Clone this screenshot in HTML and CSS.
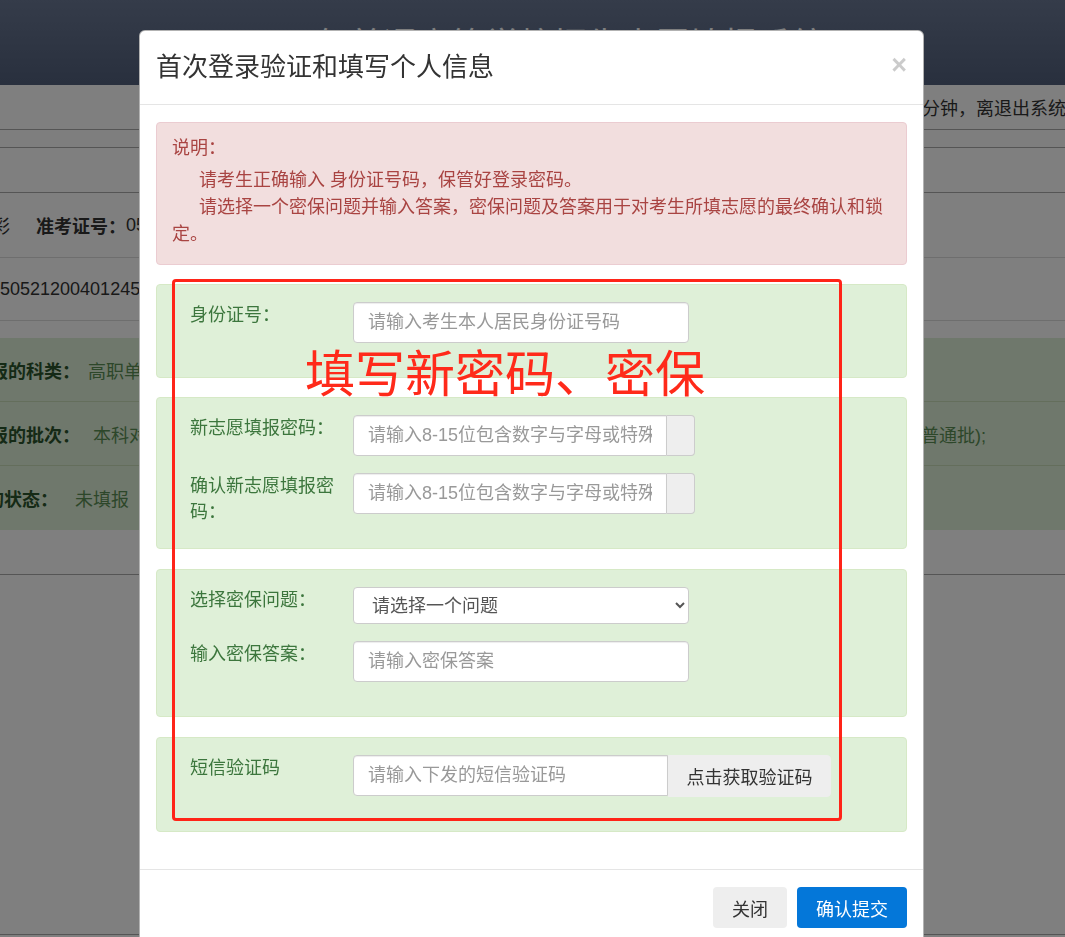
FILE: index.html
```html
<!DOCTYPE html>
<html lang="zh-CN">
<head>
    <meta charset="UTF-8">
    <meta name="viewport" content="width=device-width, initial-scale=1.0">
    <title>志愿填报系统</title>
    <link rel="stylesheet" href="styles.css">
</head>
<body>
    <div class="page">
        <div class="top-header">
            <h1>2022年普通高等学校招生志愿填报系统</h1>
        </div>
        <div class="row row-tip"><span class="login-tip">已登录12分钟，离退出系统还有8分钟</span></div>
        <div class="row row-thin"></div>
        <div class="row row-blank"></div>
        <div class="row row-info">
            <span class="cell-name">姓名：李彩</span>
            <b>准考证号：</b><span>0521050512345</span>
        </div>
        <div class="row row-id"><span class="cell-id">450521200401245612</span></div>
        <div class="gap"></div>
        <div class="score-block">
            <div class="score-row">
                <b class="lbl-a">填报的科类：</b><span class="val">高职单招类</span>
            </div>
            <div class="score-row">
                <b class="lbl-a">填报的批次：</b><span class="val val-wide">本科对口批、高职单招批、本科提前批、本科第一批、本科第二批、高职高专提前批、专科层次高职高专普通批);</span>
            </div>
            <div class="score-row last">
                <b class="lbl-b">志愿的状态：</b><span class="val val-state">未填报</span>
            </div>
        </div>
        <div class="row row-blank"></div>
        <div class="row row-rest"></div>
    </div>

    <div class="backdrop"></div>

    <div class="modal">
        <div class="modal-header">
            <h4 class="modal-title">首次登录验证和填写个人信息</h4>
            <button class="close" type="button">&times;</button>
        </div>
        <div class="modal-body">
            <div class="alert-danger">
                <div>说明：</div>
                <p>请考生正确输入 身份证号码，保管好登录密码。</p>
                <p>请选择一个密保问题并输入答案，密保问题及答案用于对考生所填志愿的最终确认和锁定。</p>
            </div>

            <div class="panel-ok first">
                <div class="form-row">
                    <label class="form-label">身份证号：</label>
                    <input class="form-input" type="text" placeholder="请输入考生本人居民身份证号码">
                </div>
            </div>

            <div class="panel-ok">
                <div class="form-row">
                    <label class="form-label">新志愿填报密码：</label>
                    <div class="input-group">
                        <input class="form-input" type="password" placeholder="请输入8-15位包含数字与字母或特殊字符的密码">
                        <span class="addon"></span>
                    </div>
                </div>
                <div class="form-row">
                    <label class="form-label">确认新志愿填报密码：</label>
                    <div class="input-group">
                        <input class="form-input" type="password" placeholder="请输入8-15位包含数字与字母或特殊字符的密码">
                        <span class="addon"></span>
                    </div>
                </div>
            </div>

            <div class="panel-ok">
                <div class="form-row">
                    <label class="form-label">选择密保问题：</label>
                    <select class="form-select">
                        <option>请选择一个问题</option>
                        <option>您母亲的姓名是？</option>
                        <option>您就读的初中是？</option>
                    </select>
                </div>
                <div class="form-row">
                    <label class="form-label">输入密保答案：</label>
                    <input class="form-input" type="text" placeholder="请输入密保答案">
                </div>
            </div>

            <div class="panel-ok">
                <div class="form-row">
                    <label class="form-label">短信验证码</label>
                    <div class="sms-group">
                        <input class="form-input" type="text" placeholder="请输入下发的短信验证码">
                        <button class="btn-code" type="button">点击获取验证码</button>
                    </div>
                </div>
            </div>
        </div>
        <div class="modal-footer">
            <button class="btn btn-default" type="button">关闭</button>
            <button class="btn btn-primary" type="button">确认提交</button>
        </div>
    </div>

    <div class="mark-box"></div>
    <div class="mark-text">填写新密码、密保</div>
</body>
</html>
```

FILE: styles.css
```css
html, body {
    margin: 0;
    height: 100%;
    overflow: hidden;
}

body {
    font-family: "Liberation Sans", "Noto Sans CJK SC", sans-serif;
    font-size: 18px;
    color: #333;
    background-color: #fff;
}

/* page behind the dialog */
.top-header {
    height: 85px;
    background: linear-gradient(#6a7894, #52607c);
    display: flex;
    justify-content: center;
    align-items: center;
}

.top-header h1 {
    margin: 0;
    font-size: 34px;
    font-weight: normal;
    color: #fff;
}

.row {
    display: flex;
    align-items: center;
    white-space: nowrap;
    border-bottom: 1px solid #aaa;
    overflow: hidden;
}

.row-tip {
    height: 44px;
}

.login-tip {
    margin-left: 848px;
}

.row-thin {
    height: 17px;
    background-color: #fcfcfc;
}

.row-blank {
    height: 44px;
}

.row-info {
    height: 64px;
    border-color: #ddd;
}

.cell-name {
    margin-left: -80px;
    margin-right: 26px;
}

.row-id {
    height: 62px;
    border-color: #ddd;
}

.cell-id {
    margin-left: -10px;
}

.gap {
    height: 17px;
}

.score-block {
    background-color: #dff0d8;
}

.score-row {
    height: 63px;
    display: flex;
    align-items: center;
    white-space: nowrap;
    overflow: hidden;
    border-bottom: 1px solid #c9dcb8;
    color: #2b542c;
}

.score-row.last {
    height: 64px;
    border-bottom: none;
}

.lbl-a {
    margin-left: -28px;
}

.lbl-b {
    margin-left: -50px;
}

.val {
    margin-left: 8px;
    color: #5a8f55;
}

.val-wide {
    margin-left: 13px;
}

.val-state {
    margin-left: 17px;
}

.row-rest {
    height: 359px;
}

.backdrop {
    position: fixed;
    top: 0;
    left: 0;
    right: 0;
    bottom: 0;
    background-color: rgba(0, 0, 0, 0.5);
}

/* dialog */
.modal {
    position: absolute;
    left: 139px;
    top: 30px;
    width: 785px;
    box-sizing: border-box;
    background-color: #fff;
    border: 1px solid rgba(0, 0, 0, 0.3);
    border-radius: 6px;
}

.modal-header {
    display: flex;
    justify-content: space-between;
    align-items: flex-start;
    padding: 15px 16px 16px;
    border-bottom: 1px solid #e5e5e5;
}

.modal-title {
    margin: 0;
    font-size: 26px;
    font-weight: normal;
    line-height: 42px;
    color: #333;
}

.close {
    margin-top: 6px;
    padding: 0;
    border: none;
    background: none;
    font-family: "Liberation Sans", sans-serif;
    font-size: 27px;
    font-weight: bold;
    line-height: 1;
    color: #000;
    opacity: 0.2;
    cursor: pointer;
}

.modal-body {
    padding: 17px 16px;
}

.alert-danger {
    padding: 12px 15px 16px;
    margin-bottom: 19px;
    background-color: #f2dede;
    border: 1px solid #ebccd1;
    border-radius: 4px;
    color: #a94442;
    line-height: 27px;
}

.alert-danger p {
    margin: 0;
    text-indent: 27px;
}

.alert-danger div + p {
    margin-top: 5px;
}

.panel-ok {
    padding: 17px;
    margin-bottom: 20px;
    background-color: #dff0d8;
    border: 1px solid #d6e9c6;
    border-radius: 4px;
}

.panel-ok.first {
    margin-bottom: 19px;
}

.form-row {
    display: flex;
    align-items: flex-start;
    margin-bottom: 17px;
}

.form-label {
    flex: none;
    width: 148px;
    height: 26px;
    padding: 0 15px 0 16px;
    line-height: 26px;
    color: #3c763d;
}

.form-input {
    width: 336px;
    height: 41px;
    box-sizing: border-box;
    padding: 0 14px;
    border: 1px solid #ccc;
    border-radius: 4px;
    box-shadow: inset 0 1px 1px rgba(0, 0, 0, 0.075);
    background-color: #fff;
    font-family: inherit;
    font-size: 18px;
    color: #555;
}

.form-input::placeholder {
    color: #999;
}

.input-group {
    display: flex;
    width: 342px;
}

.input-group .form-input {
    flex: 1;
    width: auto;
    min-width: 0;
    border-radius: 4px 0 0 4px;
}

.addon {
    width: 28px;
    height: 41px;
    box-sizing: border-box;
    background-color: #eee;
    border: 1px solid #ccc;
    border-left: none;
    border-radius: 0 4px 4px 0;
}

.form-select {
    width: 336px;
    height: 37px;
    box-sizing: border-box;
    padding: 0 10px 0 14px;
    border: 1px solid #ccc;
    border-radius: 4px;
    background-color: #fff;
    font-family: inherit;
    font-size: 18px;
    color: #555;
}

.sms-group {
    display: flex;
}

.sms-group .form-input {
    width: 315px;
    border-radius: 4px 0 0 4px;
}

.btn-code {
    width: 163px;
    height: 42px;
    border: 1px solid #eee;
    border-radius: 0 4px 4px 0;
    background-color: #eee;
    font-family: inherit;
    font-size: 18px;
    color: #333;
    cursor: pointer;
}

.modal-footer {
    display: flex;
    justify-content: flex-end;
    gap: 10px;
    padding: 17px 16px;
    border-top: 1px solid #e5e5e5;
}

.btn {
    height: 41px;
    padding: 0 18px;
    border: 1px solid transparent;
    border-radius: 4px;
    font-family: inherit;
    font-size: 18px;
    cursor: pointer;
}

.btn-default {
    background-color: #eee;
    color: #333;
}

.btn-primary {
    background-color: #0477d9;
    color: #fff;
}

/* red annotation drawn over the screenshot */
.mark-box {
    position: absolute;
    left: 172px;
    top: 279px;
    width: 670px;
    height: 542px;
    box-sizing: border-box;
    border: 3px solid #ff2418;
    border-radius: 4px;
}

.mark-text {
    position: absolute;
    left: 305px;
    top: 345px;
    font-family: "Noto Sans CJK SC", sans-serif;
    font-size: 50px;
    line-height: 50px;
    color: #ff2a1a;
    white-space: nowrap;
}
```
